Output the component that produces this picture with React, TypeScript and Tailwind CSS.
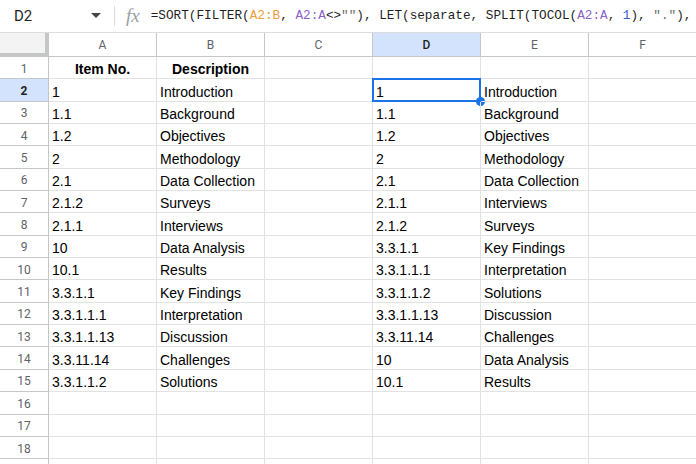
import React from "react";

const cols = ["A", "B", "C", "D", "E", "F"];

const rows: string[][] = [
    ["Item No.", "Description", "", "", "", ""],
    ["1", "Introduction", "", "1", "Introduction", ""],
    ["1.1", "Background", "", "1.1", "Background", ""],
    ["1.2", "Objectives", "", "1.2", "Objectives", ""],
    ["2", "Methodology", "", "2", "Methodology", ""],
    ["2.1", "Data Collection", "", "2.1", "Data Collection", ""],
    ["2.1.2", "Surveys", "", "2.1.1", "Interviews", ""],
    ["2.1.1", "Interviews", "", "2.1.2", "Surveys", ""],
    ["10", "Data Analysis", "", "3.3.1.1", "Key Findings", ""],
    ["10.1", "Results", "", "3.3.1.1.1", "Interpretation", ""],
    ["3.3.1.1", "Key Findings", "", "3.3.1.1.2", "Solutions", ""],
    ["3.3.1.1.1", "Interpretation", "", "3.3.1.1.13", "Discussion", ""],
    ["3.3.1.1.13", "Discussion", "", "3.3.11.14", "Challenges", ""],
    ["3.3.11.14", "Challenges", "", "10", "Data Analysis", ""],
    ["3.3.1.1.2", "Solutions", "", "10.1", "Results", ""],
    ["", "", "", "", "", ""],
    ["", "", "", "", "", ""],
    ["", "", "", "", "", ""],
    ["", "", "", "", "", ""],
];

const FormulaBar = () => (
    <div className="flex h-[33px] items-center overflow-hidden border-b border-[#dadce0] bg-white">
        <div className="flex w-[114px] shrink-0 items-center pl-[14px] pr-[13px]">
            <span className="flex-1 text-[15px] text-[#1f1f1f] font-['Roboto',sans-serif]">D2</span>
            <svg width="10" height="6" viewBox="0 0 10 6">
                <path d="M0 0 L10 0 L5 5 Z" fill="#444746" />
            </svg>
        </div>
        <div className="h-[20px] w-px shrink-0 bg-[#dadce0]" />
        <span className="ml-[11px] mr-[11px] shrink-0 text-[19px] italic text-[#9aa0a6] font-['Liberation_Serif',serif]">fx</span>
        <div className="shrink-0 whitespace-nowrap text-[12.7px] text-[#1f1f1f] font-['Liberation_Mono',monospace]">
            =SORT(FILTER(<span className="text-[#f09a36]">A2:B</span>, <span className="text-[#8a5fc9]">A2:A</span>&lt;&gt;<span className="text-[#6b6b6b]">""</span>), LET(separate, SPLIT(TOCOL(<span className="text-[#8a5fc9]">A2:A</span>, <span className="text-[#3c5ccf]">1</span>), <span className="text-[#6b6b6b]">"."</span>),
        </div>
    </div>
);

export default function App() {
    return (
        <div className="h-[464px] w-[696px] overflow-hidden bg-white font-['Liberation_Sans',Arial,sans-serif]">
            <FormulaBar />
            <div className="grid grid-cols-[49px_repeat(6,108px)]">
                {/* corner */}
                <div className="h-[24px] border-r-[4px] border-b-[4px] border-[#c4c7c5] bg-[#f3f3f3]" />
                {cols.map((c) => (
                    <div
                        key={c}
                        className={
                            c === "D"
                                ? "flex h-[24px] items-center justify-center border-r border-b border-[#c4c7c5] bg-[#d3e3fd] text-[12px] font-medium text-[#1f1f1f] font-['Roboto',sans-serif]"
                                : "flex h-[24px] items-center justify-center border-r border-b border-[#c4c7c5] bg-white text-[12px] text-[#5f6368] font-['Roboto',sans-serif]"
                        }
                    >
                        {c}
                    </div>
                ))}
                {rows.map((r, i) => (
                    <React.Fragment key={i}>
                        <div
                            className={
                                i === 1
                                    ? "flex h-[22.35px] items-center justify-center border-r border-b border-[#c4c7c5] bg-[#d3e3fd] pt-[2px] text-[12px] font-bold text-[#1f1f1f] font-['Roboto',sans-serif]"
                                    : "flex h-[22.35px] items-center justify-center border-r border-b border-[#c4c7c5] bg-white pt-[2px] text-[12px] text-[#5f6368] font-['Roboto',sans-serif]"
                            }
                        >
                            {i < 18 ? i + 1 : ""}
                        </div>
                        {r.map((v, j) => (
                            <div
                                key={j}
                                className={
                                    "relative flex h-[22.35px] items-end overflow-visible whitespace-nowrap border-r border-b border-[#e2e2e2] pb-[1px] text-[14px] leading-[16px] text-black " +
                                    (i === 0 ? "justify-center font-bold" : "pl-[3px]")
                                }
                            >
                                {v}
                                {i === 1 && j === 3 && (
                                    <>
                                        <div className="pointer-events-none absolute -top-px -left-px -right-px -bottom-px border-2 border-[#1a73e8]" />
                                        <div className="absolute -right-[5px] -bottom-[5px] h-[9px] w-[9px] rounded-full bg-[#1a73e8]" />
                                    </>
                                )}
                            </div>
                        ))}
                    </React.Fragment>
                ))}
            </div>
        </div>
    );
}
